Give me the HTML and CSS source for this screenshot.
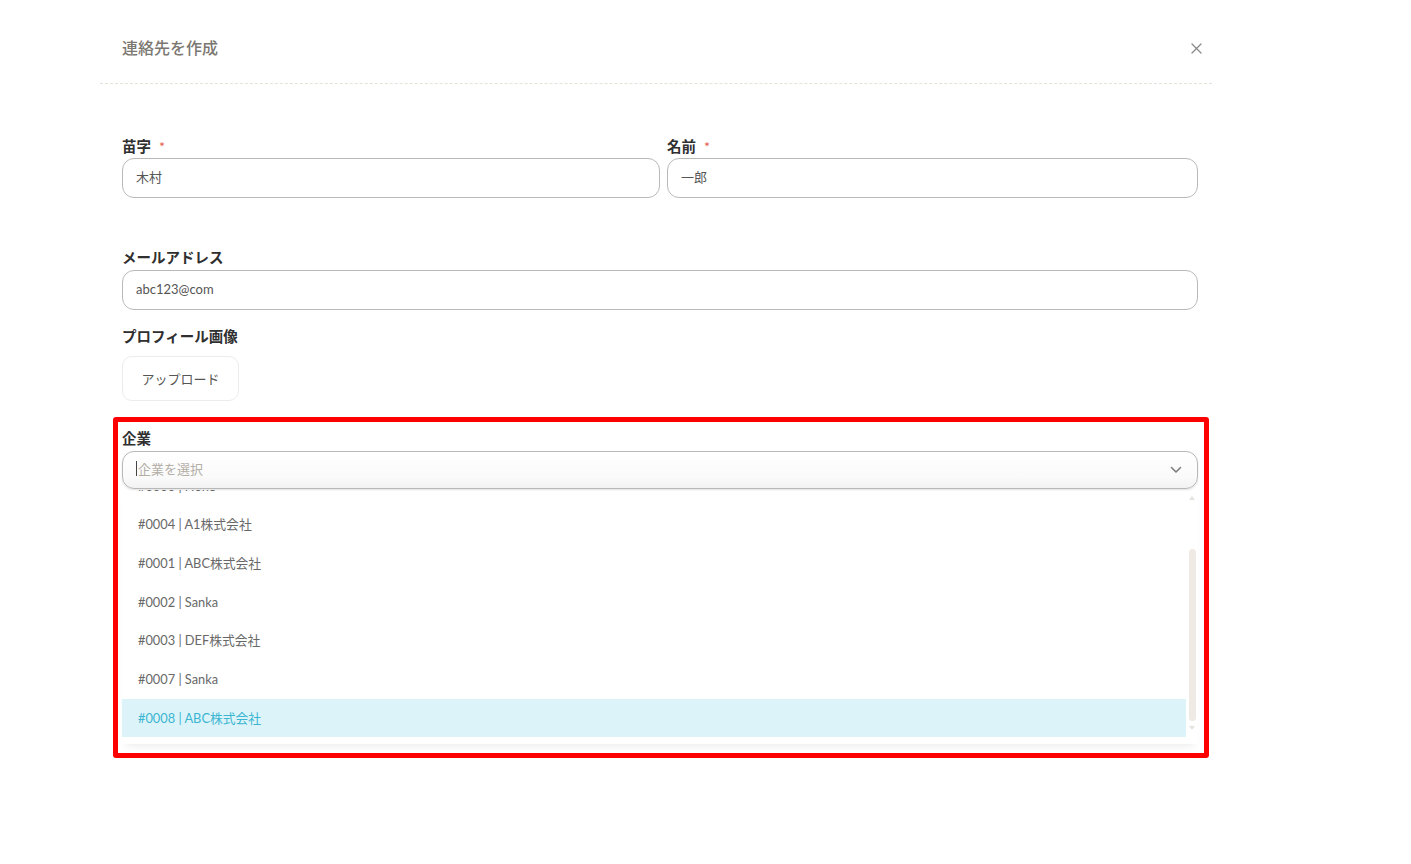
FILE: index.html
```html
<!DOCTYPE html>
<html lang="ja">
<head>
<meta charset="utf-8">
<title>連絡先を作成</title>
<link rel="stylesheet" href="styles.css">
</head>
<body>
<div class="modal">
  <div class="modal-header">
    <h2 class="modal-title">連絡先を作成</h2>
    <button class="close" aria-label="閉じる">
      <svg width="11" height="11" viewBox="0 0 11 11"><path d="M1 1L10 10M10 1L1 10" stroke="#8a8a8a" stroke-width="1.3" fill="none" stroke-linecap="round"/></svg>
    </button>
  </div>
  <div class="modal-body">
    <div class="row">
      <div class="field field-last">
        <label class="label">苗字<span class="req">*</span></label>
        <div class="input">木村</div>
      </div>
      <div class="field field-first">
        <label class="label">名前<span class="req">*</span></label>
        <div class="input">一郎</div>
      </div>
    </div>
    <div class="field field-email">
      <label class="label">メールアドレス</label>
      <div class="input">abc123@com</div>
    </div>
    <div class="field field-photo">
      <label class="label">プロフィール画像</label>
      <div><button class="upload">アップロード</button></div>
    </div>
    <div class="field field-company">
      <label class="label">企業</label>
      <div class="select-wrap">
        <div class="select">
          <span class="cursor"></span><span class="placeholder">企業を選択</span>
          <svg class="chevron" width="12" height="8" viewBox="0 0 12 8"><path d="M1.5 1.5L6 6L10.5 1.5" stroke="#7a7a7a" stroke-width="1.5" fill="none" stroke-linecap="round" stroke-linejoin="round"/></svg>
        </div>
        <div class="menu">
          <ul class="options">
            <li class="option">#0000 | None</li>
            <li class="option">#0004 | A1株式会社</li>
            <li class="option">#0001 | ABC株式会社</li>
            <li class="option">#0002 | Sanka</li>
            <li class="option">#0003 | DEF株式会社</li>
            <li class="option">#0007 | Sanka</li>
            <li class="option active">#0008 | ABC株式会社</li>
          </ul>
          <div class="scrollbar">
            <span class="arrow up"></span>
            <span class="thumb"></span>
            <span class="arrow down"></span>
          </div>
        </div>
      </div>
    </div>
  </div>
</div>
<div class="highlight-box"></div>
</body>
</html>
```
FILE: styles.css
```css
* { box-sizing: border-box; }
html, body { margin: 0; padding: 0; background: #fff; }
body {
  font-family: Lato, "Noto Sans CJK JP", "Noto Sans", sans-serif;
  color: #333;
  width: 1411px;
  height: 864px;
  overflow: hidden;
  position: relative;
}
.modal {
  margin-left: 100px;
  width: 1112px;
}
.modal-header {
  height: 84px;
  padding: 36px 10px 0 22px;
  display: flex;
  justify-content: space-between;
  align-items: flex-start;
  border-bottom: 1px dashed #e6e2da;
}
.modal-title {
  margin: 0;
  font-size: 16px;
  line-height: 24px;
  font-weight: 500;
  color: #7b7771;
}
.close {
  border: 0;
  background: none;
  padding: 0;
  width: 11px;
  height: 11px;
  margin-top: 7px;
  display: flex;
}
.modal-body {
  padding: 53px 14px 0 22px;
  display: flex;
  flex-direction: column;
}
.row {
  display: flex;
  gap: 7px;
}
.field-last { width: 538px; }
.field-first { flex: 1; }
.field {
  display: flex;
  flex-direction: column;
}
.label {
  font-size: 14.5px;
  line-height: 20px;
  font-weight: 700;
  color: #2f2f2f;
  margin-bottom: 1px;
}
.req {
  color: #e2544a;
  margin-left: 8px;
  font-size: 14px;
  font-weight: 400;
}
.input {
  height: 40px;
  border: 1px solid #b9b9b9;
  border-radius: 12px;
  padding: 0 13px;
  font-size: 13px;
  line-height: 37px;
  color: #555;
  background: #fff;
}
.field-email { margin-top: 50px; }
.field-email .label { margin-bottom: 2px; }
.field-photo { margin-top: 17px; }
.field-photo .label { margin-bottom: 9px; }
.upload {
  width: 117px;
  height: 45px;
  border: 1px solid #ececec;
  border-radius: 10px;
  background: #fff;
  font-family: Lato, "Noto Sans CJK JP", sans-serif;
  font-size: 13px;
  color: #555;
  padding: 0;
}
.field-company { margin-top: 28px; }
.field-company .label { margin-bottom: 2px; }
.select-wrap { position: relative; }
.select {
  height: 38px;
  border: 1px solid #b8b8b8;
  border-radius: 12px;
  background: linear-gradient(#ffffff, #fafafa 70%, #f2f2f2);
  box-shadow: 0 1px 2px rgba(0,0,0,0.12);
  display: flex;
  align-items: center;
  padding: 0 13px 3px;
  position: relative;
  z-index: 2;
}
.cursor {
  display: inline-block;
  width: 1px;
  height: 15px;
  background: #444;
  margin-right: 1px;
}
.placeholder {
  font-size: 13px;
  color: #b3aea6;
}
.chevron {
  margin-left: auto;
  margin-right: 2px;
  margin-top: 3px;
}
.menu {
  position: absolute;
  top: 39px;
  left: 0;
  right: 0;
  height: 254px;
  background: #fff;
  overflow: hidden;
  display: flex;
  box-shadow: 0 6px 8px -4px rgba(0,0,0,0.08);
  z-index: 1;
}
.options {
  list-style: none;
  margin: -23.5px 0 0 0;
  padding: 0;
  flex: 1;
}
.option {
  height: 38.7px;
  line-height: 38.7px;
  padding-left: 16px;
  font-size: 12.8px;
  color: #686868;
}
.option.active {
  background: #dcf4f9;
  color: #3bb5d1;
}
.scrollbar {
  width: 12px;
  position: relative;
}
.thumb {
  position: absolute;
  top: 59px;
  left: 3px;
  width: 7px;
  height: 172px;
  border-radius: 4px;
  background: #efebe4;
}
.arrow {
  position: absolute;
  left: 3px;
  width: 0;
  height: 0;
  border-left: 3.5px solid transparent;
  border-right: 3.5px solid transparent;
}
.arrow.up { top: 6px; border-bottom: 4px solid #e6e3de; }
.arrow.down { top: 236px; border-top: 4px solid #e6e3de; }
.highlight-box {
  position: absolute;
  left: 113px;
  top: 417px;
  width: 1096px;
  height: 341px;
  border: 5px solid #ff0000;
  border-radius: 3px;
  pointer-events: none;
  z-index: 5;
}
```
